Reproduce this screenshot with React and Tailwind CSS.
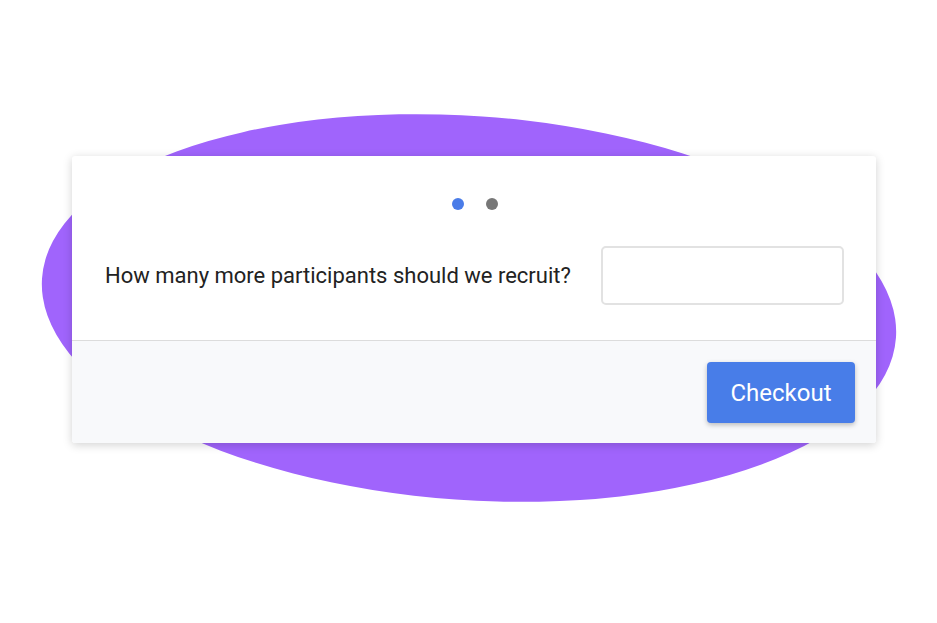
export default function App() {
  return (
    <div className="relative w-full h-[623px] bg-white overflow-hidden" style={{ fontFamily: "Roboto, 'Liberation Sans', sans-serif" }}>
      {/* Background blob */}
      <svg className="absolute inset-0" width="937" height="623" viewBox="0 0 937 623">
        <ellipse cx="469" cy="308" rx="428" ry="192" transform="rotate(4 469 308)" fill="#a064fc" />
      </svg>

      <div className="relative pt-[156px] pl-[72px]">
        <div className="w-[804px] bg-white rounded-[3px] shadow-[0_2px_10px_rgba(0,0,0,0.18)] overflow-hidden">
          <div className="pt-[42px] pb-[35px] pl-[33px] pr-[32px]">
            <div className="flex justify-center gap-[22px]">
              <span className="w-3 h-3 rounded-full bg-[#4a7ce8]" />
              <span className="w-3 h-3 rounded-full bg-[#777777]" />
            </div>
            <div className="mt-[36px] flex items-center justify-between">
              <label className="text-[22px] text-[#222222]">How many more participants should we recruit?</label>
              <input type="text" className="w-[243px] h-[59px] border-2 border-[#e2e2e2] rounded-[5px] outline-none px-3" />
            </div>
          </div>
          <div className="border-t border-[#dcdcdc] bg-[#f8f9fb] flex justify-end pt-[21px] pb-[20px] pr-[21px]">
            <button className="w-[148px] h-[61px] rounded-[4px] bg-[#487de8] text-white text-[24px] shadow-[0_2px_5px_rgba(0,0,0,0.25)]">
              Checkout
            </button>
          </div>
        </div>
      </div>
    </div>
  );
}
